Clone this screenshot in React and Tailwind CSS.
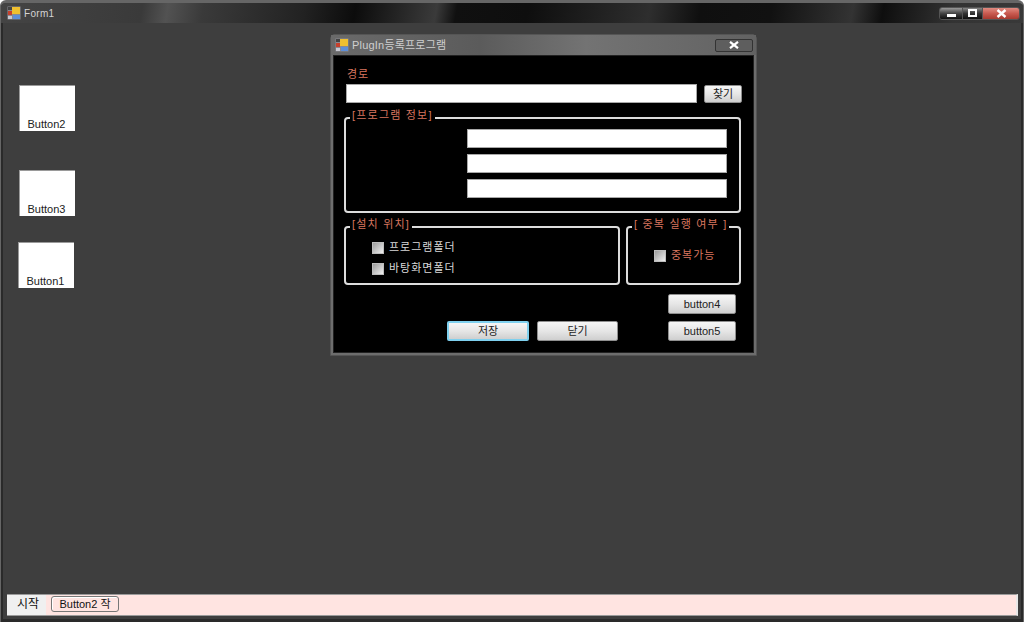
const font = { fontFamily: '"Liberation Sans", "Noto Sans CJK KR", sans-serif' };

const AppIcon = ({ className }) => (
  <svg className={className} viewBox="0 0 14 14">
    <rect x="0.5" y="0.5" width="13" height="13" fill="#8a8a92" />
    <rect x="1" y="1" width="4" height="3" fill="#444" />
    <rect x="1" y="5" width="4" height="4" fill="#c8402c" />
    <rect x="5" y="1" width="8" height="7" fill="#f0c030" />
    <rect x="6" y="9" width="7" height="4" fill="#5f8fd8" />
    <rect x="1" y="10" width="4" height="3" fill="#c9c9d2" />
  </svg>
);

const FormButton = ({ label, className = '' }) => (
  <button className={`h-5 text-[11px] text-[#222] rounded-[2px] border border-[#8f8f8f] bg-gradient-to-b from-[#f6f6f6] via-[#e6e6e6] to-[#cfcfcf] ${className}`}>
    {label}
  </button>
);

const SideButton = ({ label, className = '' }) => (
  <div className={`w-14 h-[46px] bg-white border-t border-l border-[#9a9a9a] flex items-end justify-center pr-[2px] text-[11px] text-[#222] leading-[14px] ${className}`}>
    {label}
  </div>
);

const Group = ({ legend, className = '', children }) => (
  <div className={`relative border-2 border-[#dcdcdc] rounded-[4px] ${className}`}>
    <span className="absolute -top-[11px] left-[4px] bg-black px-[2px] text-[11px] leading-[14px] tracking-[1.2px] text-[#d8765f] whitespace-pre">
      {legend}
    </span>
    {children}
  </div>
);

const Check = ({ label, labelClass = 'text-[#d8d8d8]' }) => (
  <div className="flex items-center gap-[5px] h-[13px]">
    <span className="w-3 h-3 border border-[#bdbdbd] bg-gradient-to-br from-[#9c9c9c] to-[#f0f0f0]" />
    <span className={`text-[11px] leading-[13px] tracking-[1px] -mt-px ${labelClass}`}>{label}</span>
  </div>
);

const Field = ({ className = '' }) => (
  <div className={`h-[19px] bg-white border border-[#a8a8a8] ${className}`} />
);

export default function App() {
  return (
    <div style={font} className="w-[1024px] h-[622px] flex flex-col overflow-hidden bg-[#3e3e3e] border-t-[3px] border-x border-[#666] rounded-t-[6px]">
      {/* main window title bar */}
      <div className="h-[20px] shrink-0 flex items-center pl-[6px] pr-[3px] bg-[linear-gradient(100deg,#444_0px,#3a3a3a_140px,#525252_165px,#3a3a3a_200px,#222_300px,#0c0c0c_350px,#3a3a3a_430px,#101010_450px,#0e0e0e_520px,#2e2e2e_640px,#0f0f0f_690px,#111_760px,#333_840px,#0e0e0e_870px,#333_940px,#3a3a3a_1024px)]">
        <AppIcon className="w-[14px] h-[14px]" />
        <span className="ml-[3px] text-[10px] tracking-[0.3px] text-[#d4d4d4]">Form1</span>
        <div className="ml-auto flex h-[13px] overflow-hidden rounded-[3px] border border-[#555]">
          <div className="w-[22px] flex items-end justify-center pb-[2px] bg-gradient-to-b from-[#9a9a9a] via-[#444] to-[#111]">
            <span className="w-[9px] h-[3px] bg-white" />
          </div>
          <div className="w-[21px] flex items-center justify-center border-x border-[#555] bg-gradient-to-b from-[#888] via-[#333] to-[#111]">
            <span className="w-[9px] h-[8px] border-2 border-white" />
          </div>
          <div className="w-[36px] flex items-center justify-center bg-gradient-to-b from-[#e08a80] via-[#c85a50] to-[#a83a30]">
            <svg width="11" height="9" viewBox="0 0 11 9">
              <path d="M1.5 1 L9.5 8 M9.5 1 L1.5 8" stroke="#fff" strokeWidth="2.4" />
            </svg>
          </div>
        </div>
      </div>

      {/* client area */}
      <div className="relative flex-1 flex flex-col border-x-2 border-b-[3px] border-[#2a2a2a]">
        <div className="flex-1 flex flex-col items-start pl-[16px] pt-[62px]">
          <SideButton label="Button2" />
          <SideButton label="Button3" className="mt-[39px]" />
          <SideButton label="Button1" className="mt-[26px] -ml-px" />
        </div>

        {/* dialog floats over the client area */}
        <div className="absolute left-[327px] top-[11px] w-[427px] h-[322px] flex flex-col rounded-t-[5px] border border-[#555] bg-[#6d6d6d]">
          <div className="h-[20px] shrink-0 flex items-center pl-[4px] pr-[3px] bg-[linear-gradient(90deg,#6a6a6a,#5b5b5b_35%,#737373_60%,#626262)]">
            <AppIcon className="w-[14px] h-[14px]" />
            <span className="ml-[3px] text-[11px] tracking-[0.2px] text-[#cfcfcf]">PlugIn등록프로그램</span>
            <div className="ml-auto w-[38px] h-[13px] flex items-center justify-center border border-[#333] rounded-[2px] bg-[#5e5e5e]">
              <svg width="10" height="8" viewBox="0 0 10 8">
                <path d="M1 0.8 L9 7.2 M9 0.8 L1 7.2" stroke="#fff" strokeWidth="2.2" />
              </svg>
            </div>
          </div>

          <div className="flex-1 mx-[2px] mb-[2px] bg-black pt-[11px] flex flex-col border border-[#222]">
            <div className="pl-[13px] text-[11px] leading-[14px] tracking-[0.8px] text-[#d8765f]">경로</div>

            <div className="flex items-center pl-[12px] mt-[3px] gap-[7px]">
              <Field className="w-[351px]" />
              <FormButton label="찾기" className="w-[38px] !h-[18px]" />
            </div>

            <Group legend="[프로그램 정보]" className="ml-[10px] w-[397px] h-[96px] mt-[14px] flex flex-col items-end pr-3 pt-[10px] gap-[6px]">
              <Field className="w-[260px]" />
              <Field className="w-[260px]" />
              <Field className="w-[260px]" />
            </Group>

            <div className="flex ml-[10px] mt-[13px] gap-[6px]">
              <Group legend="[설치 위치]" className="w-[276px] h-[59px] flex flex-col pl-[26px] pt-[13px] gap-[8px]">
                <Check label="프로그램폴더" />
                <Check label="바탕화면폴더" />
              </Group>
              <Group legend="[ 중복 실행 여부 ]" className="w-[115px] h-[59px] flex items-center pl-[26px]">
                <Check label="중복가능" labelClass="text-[#d8765f]" />
              </Group>
            </div>

            <div className="flex justify-end pr-[17px] mt-[9px]">
              <FormButton label="button4" className="w-[68px]" />
            </div>
            <div className="flex pl-[113px] mt-[7px]">
              <FormButton label="저장" className="w-[82px] !border-[#7fd0ee] border-2" />
              <FormButton label="닫기" className="w-[81px] ml-[8px]" />
              <FormButton label="button5" className="w-[68px] ml-[50px]" />
            </div>
          </div>
        </div>

        {/* bottom task strip */}
        <div className="h-[22px] ml-[4px] mr-[3px] mb-[3px] shrink-0 flex items-center bg-[#ffe4e1] border-t border-b border-[#9a9a9a] border-r-2 border-r-[#e8e8e8]">
          <span className="w-[39px] self-stretch flex items-center justify-center pl-[3px] pb-[3px] text-xs text-[#111] bg-[#f0f0f0]">시작</span>
          <button className="ml-[5px] mb-[2px] w-[68px] h-[16px] text-[11px] leading-[14px] text-[#111] rounded-[3px] border border-[#777] bg-[#ffe4e1] shadow-[inset_1px_1px_0_#fff]">
            Button2 작
          </button>
        </div>
      </div>
    </div>
  );
}
